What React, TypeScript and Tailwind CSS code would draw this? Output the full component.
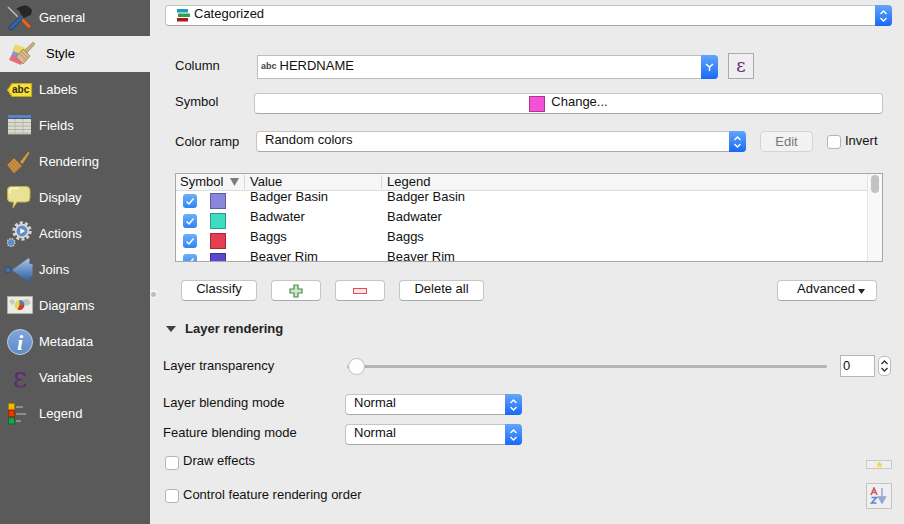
import type { ReactNode } from 'react';

function GeneralIcon() {
  return (
    <svg width="26" height="26" viewBox="0 0 26 26">
      <path d="M1 2 L11 12" stroke="#b9b9b9" strokeWidth="1.6" />
      <path d="M11 12 L13 10 L24 21 L22 24 Z" fill="#e8691a" stroke="#8f3f0c" strokeWidth="0.6" />
      <path d="M2 22 L15 9 L18 11 L5 25 Q1 25 2 22 Z" fill="#2f62a8" stroke="#15315c" strokeWidth="0.6" />
      <path d="M9 4 Q15 -1 21 1 L25 5 L24 10 L21 11 L17 13 L13 8 Q13 5 9 4 Z" fill="#262626" />
    </svg>
  );
}

function StyleIcon() {
  return (
    <svg width="26" height="26" viewBox="0 0 26 26">
      <path d="M5 9 L16 13 L12 24 L0 19 Z" fill="#ea6a7e" />
      <path d="M5 6 L16 10 L13 18 L3 14 Z" fill="#7f9bd6" />
      <path d="M6 3 L17 7 L14 14 L4 10 Z" fill="#ecd96a" />
      <path d="M18 12 L26 3 L24 1 L15 10 Z" fill="#c9ad80" stroke="#93794f" strokeWidth="0.5" />
      <path d="M14 8 L21 15 L14 23 L7 16 Z" fill="#d5b78a" stroke="#94774c" strokeWidth="0.7" />
      <path d="M10 12 L17 19 M12 10 L19 17" stroke="#a88c5f" strokeWidth="0.7" />
    </svg>
  );
}

function LabelsIcon() {
  return (
    <div className="relative w-[26px] h-[26px]">
      <svg width="26" height="26" viewBox="0 0 26 26">
        <path d="M0.5 13 L5 6.5 H24.5 V19.5 H5 Z" fill="#f7df38" stroke="#c9a714" strokeWidth="1.2" />
      </svg>
      <span className="absolute left-[5px] top-[6px] text-[10px] leading-[14px] font-bold text-[#2b2b2b]">abc</span>
    </div>
  );
}

function FieldsIcon() {
  return (
    <svg width="26" height="26" viewBox="0 0 26 26">
      <rect x="1" y="2" width="23" height="20" fill="#dcdcd2" />
      <rect x="1" y="2" width="23" height="3" fill="#5b82bb" />
      <rect x="1" y="5" width="23" height="1" fill="#38567f" />
      <path d="M1 9.5 H24 M1 13 H24 M1 16.5 H24 M1 20 H24" stroke="#b1b1a6" strokeWidth="1" />
      <path d="M8 6 V22 M16 6 V22" stroke="#b9b9ae" strokeWidth="1" />
      <rect x="1" y="21" width="23" height="1" fill="#85857d" />
    </svg>
  );
}

function RenderingIcon() {
  return (
    <svg width="26" height="26" viewBox="0 0 26 26">
      <path d="M13 13 L21.5 2.5 L22.5 4 L15.5 15 Z" fill="#d49a3f" />
      <path d="M7 9 L15 17 L7 24.5 L0 16 Z" fill="#c98f45" stroke="#8b5d24" strokeWidth="0.7" />
      <path d="M4 13 L11 20.5 M6 11 L13 18.5 M2.5 15.5 L8.5 22" stroke="#9a6b2e" strokeWidth="0.7" />
    </svg>
  );
}

function DisplayIcon() {
  return (
    <svg width="26" height="26" viewBox="0 0 26 26">
      <path d="M5 1.5 H19 Q23 1.5 23 5 V13 Q23 17 19 17 H10 L6 23 L6.5 17 H4 Q0.5 17 0.5 13 V5 Q0.5 1.5 5 1.5 Z" fill="#e9e193" stroke="#c5ae4b" strokeWidth="1" />
      <path d="M3 9 V5 Q3 3.5 5 3.5 H12" stroke="#f8f5cf" strokeWidth="1.5" fill="none" />
    </svg>
  );
}

function ActionsIcon() {
  return (
    <svg width="26" height="26" viewBox="0 0 26 26">
      <circle cx="15" cy="10" r="8" fill="none" stroke="#d5d5d5" strokeWidth="3.4" strokeDasharray="3 2.03" />
      <circle cx="15" cy="10" r="7.2" fill="#d9d9d9" />
      <circle cx="15" cy="10" r="5.4" fill="#5e8fca" />
      <path d="M13.3 7.2 L18.2 10 L13.3 12.8 Z" fill="#ffffff" />
      <circle cx="4" cy="21.5" r="3.8" fill="#5e8fca" stroke="#c5c5c5" strokeWidth="1.6" strokeDasharray="1.6 1" />
    </svg>
  );
}

function JoinsIcon() {
  return (
    <svg className="-ml-[2px] shrink-0" width="28" height="26" viewBox="0 0 28 26">
      <defs>
        <linearGradient id="joinFill" x1="0" y1="0" x2="0" y2="1">
          <stop offset="0" stopColor="#a7c3e8" />
          <stop offset="1" stopColor="#2d5a9c" />
        </linearGradient>
      </defs>
      <circle cx="3" cy="13" r="3" fill="#3f6fae" stroke="#1f3f70" strokeWidth="0.6" />
      <path d="M7 13 L23 1.5 L24.5 1.5 V7 H27.5 V20 H24.5 V25 H23 Z" fill="url(#joinFill)" />
    </svg>
  );
}

function DiagramsIcon() {
  return (
    <svg width="26" height="26" viewBox="0 0 26 26">
      <rect x="0.5" y="3.5" width="25" height="17" fill="#ecece6" stroke="#b5b5ac" strokeWidth="0.8" />
      <path d="M15 7 L21 6 L24 10 L20 13 L17 11 Z M2 8 L6 6 L8 9 L5 12 Z" fill="#c5c5bd" />
      <circle cx="12.5" cy="12" r="5" fill="#f0d44c" />
      <path d="M12.5 12 V7 A5 5 0 0 1 17.5 12 Z" fill="#4d78bd" />
      <path d="M12.5 12 H17.5 A5 5 0 0 1 10.5 16.6 Z" fill="#d8352b" />
    </svg>
  );
}

function MetadataIcon() {
  return (
    <div className="relative w-[26px] h-[26px]">
      <div className="absolute inset-0 rounded-full bg-gradient-to-b from-[#7fa6d9] to-[#5f8cc8] border border-[#c4d3e8]" />
      <span className="absolute inset-0 flex items-center justify-center font-['Liberation_Serif',serif] italic font-bold text-[22px] text-white">i</span>
    </div>
  );
}

function VariablesIcon() {
  return (
    <span className="flex w-[26px] h-[26px] items-center justify-center font-['DejaVu_Serif',serif] text-[28px] leading-[26px] text-[#5c2c70]">ε</span>
  );
}

function LegendIcon() {
  return (
    <svg width="26" height="26" viewBox="0 0 26 26">
      <rect x="1.5" y="2.5" width="6" height="6" fill="#f5b800" stroke="#a67c00" />
      <rect x="1.5" y="9.5" width="6" height="6" fill="#e83a00" stroke="#9a2a00" />
      <rect x="1.5" y="17" width="6" height="6" fill="#18a848" stroke="#0c6a2b" />
      <rect x="9" y="5" width="7" height="2" fill="#8e8e8e" />
      <rect x="9" y="12" width="10" height="2" fill="#8e8e8e" />
      <rect x="9" y="19" width="5" height="2" fill="#8e8e8e" />
    </svg>
  );
}

const menu: { name: string; icon: ReactNode }[] = [
  { name: 'General', icon: <GeneralIcon /> },
  { name: 'Style', icon: <StyleIcon /> },
  { name: 'Labels', icon: <LabelsIcon /> },
  { name: 'Fields', icon: <FieldsIcon /> },
  { name: 'Rendering', icon: <RenderingIcon /> },
  { name: 'Display', icon: <DisplayIcon /> },
  { name: 'Actions', icon: <ActionsIcon /> },
  { name: 'Joins', icon: <JoinsIcon /> },
  { name: 'Diagrams', icon: <DiagramsIcon /> },
  { name: 'Metadata', icon: <MetadataIcon /> },
  { name: 'Variables', icon: <VariablesIcon /> },
  { name: 'Legend', icon: <LegendIcon /> },
];

function Sidebar() {
  return (
    <div className="w-[150px] h-full shrink-0 bg-[#5a5a5a] flex flex-col">
      {menu.map((item) =>
        item.name === 'Style' ? (
          <div key={item.name} className="h-9 flex items-center pl-[9px] gap-[11px] bg-[#ebebeb] text-black">
            <div className="w-[26px] h-[26px] flex items-center">{item.icon}</div>
            <span>{item.name}</span>
          </div>
        ) : (
          <div key={item.name} className="h-9 flex items-center pl-[7px] gap-[6px] text-white">
            <div className="w-[26px] h-[26px] flex items-center">{item.icon}</div>
            <span>{item.name}</span>
          </div>
        ),
      )}
    </div>
  );
}

function Chevrons({ color = 'white' }: { color?: string }) {
  return (
    <svg width="9" height="14" viewBox="0 0 9 14" fill="none" stroke={color} strokeWidth="1.4">
      <path d="M1.5 5 L4.5 2 L7.5 5" />
      <path d="M1.5 9 L4.5 12 L7.5 9" />
    </svg>
  );
}

function Combo({ width, label, children }: { width: string; label?: string; children?: ReactNode }) {
  return (
    <div className={`${width} h-[21px] flex bg-white rounded-[4px] border border-[#c4c4c4] border-b-[#a9a9a9] border-r-0`}>
      <div className="flex-1 pl-[8px] flex items-start leading-[15px] text-[#111]">
        {children}
        {label}
      </div>
      <div className="w-[17px] -my-px h-[21px] rounded-r-[4px] bg-gradient-to-b from-[#62a5fb] to-[#1668f6] flex items-center justify-center">
        <Chevrons />
      </div>
    </div>
  );
}

function Btn({ width, children }: { width: string; children: ReactNode }) {
  return (
    <div className={`${width} h-[21px] bg-white rounded-[4px] border border-[#c6c6c6] border-b-[#a8a8a8] flex items-center justify-center text-[#111] leading-[15px]`}>
      {children}
    </div>
  );
}

function Check() {
  return <div className="w-[14px] h-[14px] shrink-0 rounded-[3px] bg-white border border-[#b5b5b5]" />;
}

const rows = [
  { name: 'Badger Basin', color: 'bg-[#8886dc]', edge: 'border-[#5f5da0]' },
  { name: 'Badwater', color: 'bg-[#3fdcc3]', edge: 'border-[#2b9a88]' },
  { name: 'Baggs', color: 'bg-[#e53e50]', edge: 'border-[#a02a38]' },
  { name: 'Beaver Rim', color: 'bg-[#5a46d0]', edge: 'border-[#3f3192]' },
];

function CategoryTable() {
  return (
    <div className="ml-[25px] mt-[21px] w-[708px] h-[89px] flex bg-white border border-[#a8a8a8] overflow-hidden">
      <div className="flex-1 min-w-0">
        <div className="h-[17px] flex items-center bg-[#f6f6f6] border-b border-[#dcdcdc] text-[#111]">
          <div className="w-[69px] h-[14px] pl-[4px] flex items-center border-r border-[#d8d8d8]">
            Symbol
            <svg className="ml-[7px]" width="9" height="8" viewBox="0 0 9 8">
              <path d="M0 0 H9 L4.5 8 Z" fill="#7b7b7b" />
            </svg>
          </div>
          <div className="w-[137px] h-[14px] pl-[5px] flex items-center border-r border-[#d8d8d8]">Value</div>
          <div className="pl-[5px]">Legend</div>
        </div>
        {rows.map((row) => (
          <div key={row.name} className="h-[20px] flex items-start pl-[7px] text-[#111] leading-[13px] shrink-0">
            <div className="w-[14px] h-[14px] mt-[3px] rounded-[3px] bg-gradient-to-b from-[#6cb0fb] to-[#2e83f6] flex items-center justify-center">
              <svg width="10" height="9" viewBox="0 0 10 9" fill="none" stroke="white" strokeWidth="1.5">
                <path d="M1.5 4.5 L4 7 L8.5 1.5" />
              </svg>
            </div>
            <div className={`w-[16px] h-[16px] ml-[13px] mt-[2px] border ${row.color} ${row.edge}`} />
            <div className="w-[137px] ml-[24px] -mt-px">{row.name}</div>
            <div className="-mt-px">{row.name}</div>
          </div>
        ))}
      </div>
      <div className="w-[15px] bg-[#f8f8f8] border-l border-[#e4e4e4] pt-[1px] pl-[3px]">
        <div className="w-[8px] h-[18px] rounded-full bg-[#c2c2c2]" />
      </div>
    </div>
  );
}

function App() {
  return (
    <div className="w-[904px] h-[524px] flex overflow-hidden text-[13px] font-['Liberation_Sans',Arial,sans-serif]">
      <Sidebar />
      <div className="relative flex-1 bg-[#ebebeb] flex flex-col text-[#111]">
        <div className="absolute left-0 top-[290px] w-[7px] h-[8px] bg-[#f4f4f4] flex items-center justify-center">
          <div className="w-[5px] h-[5px] rounded-full bg-[#bdbdbd]" />
        </div>

        <div className="ml-[15px] mt-[5px]">
          <Combo width="w-[727px]" label="Categorized">
            <svg className="ml-[3px] mr-[4px] mt-[2px]" width="13" height="14" viewBox="0 0 13 14">
              <rect x="0" y="1" width="11" height="3.5" fill="#1f9bc4" />
              <rect x="1" y="5.5" width="12" height="3.5" fill="#2f9e4f" />
              <rect x="0" y="10" width="11" height="3.5" fill="#b01818" />
            </svg>
          </Combo>
        </div>

        <div className="ml-[25px] mt-[27px] h-[26px] flex items-center">
          <div className="w-[82px]">Column</div>
          <div className="w-[461px] h-[24px] mt-[2px] flex bg-white border border-[#bdbdbd] border-r-0 rounded-r-[4px]">
            <div className="flex-1 flex items-center pl-[3px] pb-[3px] text-[#111]">
              <span className="text-[9px] font-bold text-[#444] mt-[3px] mr-[3px]">abc</span>
              HERDNAME
            </div>
            <div className="w-[17px] -my-px h-[24px] rounded-r-[4px] bg-gradient-to-b from-[#62a5fb] to-[#1668f6] flex items-center justify-center">
              <svg width="9" height="8" viewBox="0 0 9 8" fill="none" stroke="white" strokeWidth="1.5">
                <path d="M1 1 L4.5 4 L8 1 M4.5 4 V8" />
              </svg>
            </div>
          </div>
          <div className="ml-[10px] w-[26px] h-[26px] bg-[#f0eef0] border border-[#ababab] flex items-center justify-center font-['DejaVu_Serif',serif] text-[18px] leading-[22px] text-[#5c2c70]">ε</div>
        </div>

        <div className="ml-[25px] mt-[14px] h-[21px] flex items-center">
          <div className="w-[79px] pb-[4px]">Symbol</div>
          <Btn width="w-[629px]">
            <div className="w-[16px] h-[16px] mr-[6px] bg-[#f450d8] border border-[#a8368f]" />
            <span className="pb-[5px]">Change...</span>
          </Btn>
        </div>

        <div className="ml-[25px] mt-[17px] h-[21px] flex items-center">
          <div className="w-[81px] leading-[25px]">Color ramp</div>
          <Combo width="w-[490px]" label="Random colors" />
          <div className="ml-[14px] w-[53px] h-[21px] rounded-[4px] bg-[#f2f2f2] border border-[#d4d4d4] flex items-center justify-center text-[#777]">Edit</div>
          <div className="ml-[14px] mr-[4px]"><Check /></div>
          <span className="pb-[2px]">Invert</span>
        </div>

        <CategoryTable />

        <div className="ml-[31px] mt-[18px] h-[21px] flex">
          <Btn width="w-[76px]"><span className="pb-[5px]">Classify</span></Btn>
          <div className="ml-[14px]">
            <Btn width="w-[50px]">
              <svg width="14" height="14" viewBox="0 0 14 14">
                <path d="M5 1 H9 V5 H13 V9 H9 V13 H5 V9 H1 V5 H5 Z" fill="#cfe8c8" stroke="#4f8a4f" strokeWidth="1.2" />
              </svg>
            </Btn>
          </div>
          <div className="ml-[14px]">
            <Btn width="w-[50px]">
              <svg width="14" height="6" viewBox="0 0 14 6">
                <rect x="0.5" y="0.5" width="13" height="5" fill="#fbe4e4" stroke="#ea4a55" />
              </svg>
            </Btn>
          </div>
          <div className="ml-[14px]">
            <Btn width="w-[85px]"><span className="pb-[5px]">Delete all</span></Btn>
          </div>
          <div className="ml-[293px]">
            <Btn width="w-[100px]">
              <span className="pb-[5px] pl-[8px]">Advanced</span>
              <svg className="ml-[3px] mt-[1px]" width="7" height="5" viewBox="0 0 7 5">
                <path d="M0 0 H7 L3.5 5 Z" fill="#222" />
              </svg>
            </Btn>
          </div>
        </div>

        <div className="ml-[15px] mt-[20px] h-[16px] flex items-center font-bold text-[#222]">
          <svg className="mr-[8px]" width="12" height="8" viewBox="0 0 12 8">
            <path d="M1 1 H11 L6 7 Z" fill="#3f3f3f" />
          </svg>
          Layer rendering
        </div>

        <div className="ml-[13px] mt-[18px] h-[22px] flex items-center">
          <div className="w-[184px]">Layer transparency</div>
          <div className="relative w-[480px] h-[3px] rounded-full bg-[#b4b4b4]">
            <div className="absolute left-[1px] top-[-7px] w-[17px] h-[17px] rounded-full bg-white border border-[#bcbcbc]" />
          </div>
          <div className="ml-[13px] w-[35px] h-[22px] bg-white border border-[#b5b5b5] pl-[2px] flex items-center">0</div>
          <div className="ml-[3px] w-[13px] h-[20px] rounded-[5px] bg-white border border-[#bcbcbc] flex items-center justify-center">
            <Chevrons color="#333" />
          </div>
        </div>

        <div className="ml-[13px] mt-[17px] h-[21px] flex items-center">
          <div className="w-[182px] pb-[3px]">Layer blending mode</div>
          <Combo width="w-[177px]" label="Normal" />
        </div>

        <div className="ml-[13px] mt-[9px] h-[21px] flex items-center">
          <div className="w-[182px] pb-[3px]">Feature blending mode</div>
          <Combo width="w-[177px]" label="Normal" />
        </div>

        <div className="ml-[15px] mt-[10px] w-[727px] h-[15px] flex items-center">
          <Check />
          <span className="ml-[4px] pb-[3px]">Draw effects</span>
          <div className="ml-auto mt-[3px] w-[26px] h-[9px] bg-[#efefef] border border-[#c9c9c9] flex items-center justify-center">
            <svg width="7" height="7" viewBox="0 0 10 10">
              <path d="M5 0 L6.5 3.5 L10 4 L7.5 6.5 L8 10 L5 8 L2 10 L2.5 6.5 L0 4 L3.5 3.5 Z" fill="#f4d84a" />
            </svg>
          </div>
        </div>

        <div className="ml-[15px] mt-[13px] w-[727px] h-[26px] flex items-center">
          <Check />
          <span className="ml-[4px] pb-[2px]">Control feature rendering order</span>
          <div className="ml-auto w-[26px] h-[26px] bg-[#efefef] border border-[#c4c4c4] flex items-center justify-center">
            <svg width="18" height="18" viewBox="0 0 18 18">
              <path d="M1 8 L4 1 L7 8 M2.2 5.5 H5.8" fill="none" stroke="#cc5a62" strokeWidth="1.6" />
              <path d="M1.5 10.5 H6.5 L1.5 16 H6.5" fill="none" stroke="#5b84cc" strokeWidth="1.6" />
              <path d="M12 1 V11 M8.5 10 H15.5 L12 16 Z" fill="#8fa8cc" stroke="#8fa8cc" strokeWidth="1.4" />
            </svg>
          </div>
        </div>
      </div>
    </div>
  );
}

export default App;
